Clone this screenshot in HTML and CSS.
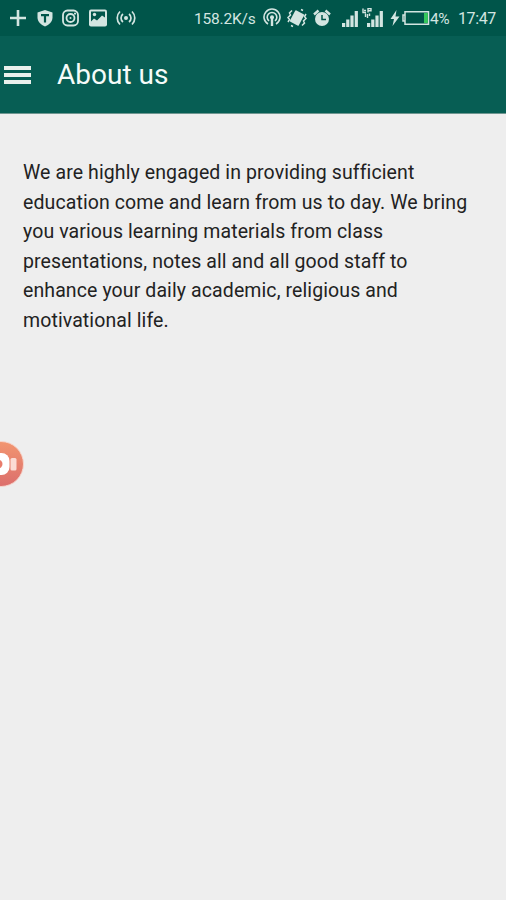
FILE: index.html
```html
<!DOCTYPE html>
<html lang="en">
<head>
    <meta charset="utf-8">
    <meta name="viewport" content="width=device-width, initial-scale=1.0">
    <title>About us</title>
    <link rel="stylesheet" href="styles.css">
</head>
<body>
    <div class="status-bar">
        <div class="notifications">
            <svg width="18" height="20" viewBox="0 0 18 20"><path d="M9 2v16M1 10h16" stroke="currentColor" stroke-width="2.6"/></svg>
            <svg width="16" height="20" viewBox="0 0 16 20"><path d="M8 2l7.5 2.5v5C15.500 13.500 12 17 8 18.500 4 17 .5 13.500 .5 9.500v-5z" fill="currentColor"/><path d="M4 7.200h8M8 7v7.500" stroke="#00554a" stroke-width="2.200"/></svg>
            <svg width="17" height="20" viewBox="0 0 17 20" fill="none" stroke="currentColor" stroke-width="1.800"><rect x="1" y="2.500" width="15" height="15" rx="4.500"/><circle cx="8.500" cy="10" r="4"/><circle cx="8.500" cy="10" r="1" stroke="none" fill="currentColor"/><path d="M12 5.700h2"/></svg>
            <svg width="18" height="20" viewBox="0 0 18 20"><rect x="0" y="1.500" width="18" height="17" rx="2" fill="currentColor"/><path d="M2 3.500h14v6l-3-2-5 5-3-2-3 3z" fill="#00554a"/><circle cx="5.500" cy="6.500" r="1.700" fill="currentColor"/></svg>
            <svg width="20" height="20" viewBox="0 0 20 20" fill="none" stroke="currentColor" stroke-width="1.700"><circle cx="10" cy="10" r="2" fill="currentColor" stroke="none"/><path d="M7 6a5 5 0 0 0 0 8M13 6a5 5 0 0 1 0 8M4 3.500a9 9 0 0 0 0 13M16 3.500a9 9 0 0 1 0 13"/></svg>
        </div>
        <div class="system">
            <span class="speed">158.2K/s</span>
            <svg class="hotspot" width="18" height="20" viewBox="0 0 18 20" fill="none" stroke="currentColor" stroke-width="1.600"><path d="M5 16a8 8 0 1 1 8 0M6 13a4.800 4.800 0 1 1 6 0"/><circle cx="9" cy="9.300" r="2" fill="currentColor" stroke="none"/><path d="M9 10v8" stroke-width="2.400"/></svg>
            <svg class="vibrate" width="20" height="20" viewBox="0 0 20 20"><rect x="5" y="3.500" width="10" height="13" rx="1" transform="rotate(28 10 10)" fill="currentColor"/><path d="M5 2.500L2.500 5l1 2L1 9.500l1.500 2L1 14M15 17.500l2.500-2.500-1-2 2.500-2.500-1.500-2L19 6M4 17.500l2 1M14 1.500l2 1" fill="none" stroke="currentColor" stroke-width="1.500"/></svg>
            <svg class="alarm" width="18" height="20" viewBox="0 0 18 20"><circle cx="9" cy="11" r="7" fill="currentColor"/><path d="M1 6.500l4.500-4M17 6.500l-4.500-4" stroke="currentColor" stroke-width="2.400"/><path d="M9 7v4.500h4" fill="none" stroke="#00554a" stroke-width="1.500"/></svg>
            <svg class="signal" width="18" height="20" viewBox="0 0 18 20" fill="currentColor"><path d="M1 15h3.200v4H1zM5.200 11.500h3.200V19H5.200zM9.400 7.500h3.200V19H9.400zM13.700 3h3.200v16h-3.200z"/></svg>
            <svg class="signal-data" width="23" height="20" viewBox="0 0 23 20" fill="currentColor"><path d="M5 15h3.200v4H5zM9.200 11.500h3.200V19H9.200zM13.400 7.500h3.200V19h-3.200zM17.700 3h3.200v16h-3.200z"/><path d="M1 .5v4h3M2 2.500h2M6 4.500v-4h3v2.200H6M3.500 9V5.500M5.500 6v4M7.500 5.500V8" fill="none" stroke="currentColor" stroke-width="1.400"/></svg>
            <svg class="bolt" width="10" height="20" viewBox="0 0 10 20"><path d="M6.500 2L.5 11H4l-1.500 7L9.500 8.500H5.500z" fill="currentColor"/></svg>
            <svg class="battery" width="28" height="20" viewBox="0 0 28 20"><path d="M2.800 7H1v6h1.800M3 3.800h23.500v12.400H3z" fill="none" stroke="currentColor" stroke-width="1.500"/><path d="M22 5h3.800v10H22z" fill="#35c85c"/></svg>
            <span class="percent">4%</span>
            <span class="clock">17:47</span>
        </div>
    </div>

    <header class="app-bar">
        <button class="menu-button" type="button" aria-label="Menu">
            <span></span>
            <span></span>
            <span></span>
        </button>
        <h1>About us</h1>
    </header>

    <main>
        <p>
            We are highly engaged in providing sufficient<br>
            education come and learn from us to day. We bring<br>
            you various learning materials from class<br>
            presentations, notes all and all good staff to<br>
            enhance your daily academic, religious and<br>
            motivational life.
        </p>
    </main>

    <!-- Floating recorder button, half off the left edge -->
    <div class="recorder">
        <svg width="24" height="46" viewBox="0 0 24 46">
            <defs>
                <linearGradient id="coral" x1="0" y1="0" x2="0" y2="1">
                    <stop offset="0" stop-color="#f29670"/>
                    <stop offset="1" stop-color="#dc6e6c"/>
                </linearGradient>
            </defs>
            <circle cx="1" cy="23" r="22.500" fill="url(#coral)" stroke="#f6d5cc"/>
            <rect x="-12" y="12" width="21.500" height="22" rx="8" fill="#fff"/>
            <circle cx="-2" cy="23" r="4.500" fill="#e97d6c"/>
            <rect x="10.500" y="17" width="6" height="12.500" rx="1.500" fill="#fbdcd4"/>
        </svg>
    </div>
</body>
</html>
```
FILE: styles.css
```css
body {
    font-family: Roboto, "Liberation Sans", sans-serif;
    background-color: #eeeeee;
    margin: 0;
    min-height: 100vh;
}

svg {
    display: block;
    flex: none;
}

.status-bar {
    display: flex;
    justify-content: space-between;
    align-items: center;
    box-sizing: border-box;
    height: 36px;
    padding: 0 10px 0 9px;
    background-color: #00554a;
    color: #d3e5e1;
    font-size: 16px;
    white-space: nowrap;
}

.notifications,
.system {
    display: flex;
    align-items: center;
}

.notifications {
    gap: 9.5px;
}

.speed {
    width: 62px;
    margin-right: 7px;
    padding-top: 2px;
    font-size: 15.5px;
    letter-spacing: -0.2px;
}

.hotspot,
.vibrate {
    margin-right: 6px;
}

.alarm {
    margin-right: 10px;
}

.signal {
    margin-right: 3px;
}

.signal-data {
    margin-right: 5px;
}

.bolt {
    margin-right: 2px;
}

.percent {
    width: 21px;
    margin-right: 7px;
    padding-top: 1px;
    font-size: 15.5px;
    letter-spacing: -0.5px;
}

.clock {
    width: 38px;
    padding-top: 1px;
    letter-spacing: -0.4px;
}

.app-bar {
    display: flex;
    align-items: center;
    box-sizing: border-box;
    height: 78px;
    padding-left: 4px;
    background-color: #075e54;
    border-bottom: 1px solid #6f9690;
}

.menu-button {
    display: flex;
    flex-direction: column;
    gap: 3px;
    width: 27px;
    margin: 0 26px 0 0;
    padding: 0;
    border: none;
    background: none;
}

.menu-button span {
    height: 4px;
    background-color: #e9f0ec;
}

h1 {
    margin: 0;
    color: #f5fbf9;
    font-size: 28px;
    font-weight: 400;
}

main {
    padding: 44px 23px;
}

p {
    margin: 0;
    color: #222;
    font-size: 19.5px;
    line-height: 29.5px;
    letter-spacing: 0.1px;
    white-space: nowrap;
}

.recorder {
    position: absolute;
    top: 441px;
    left: 0;
}
```
